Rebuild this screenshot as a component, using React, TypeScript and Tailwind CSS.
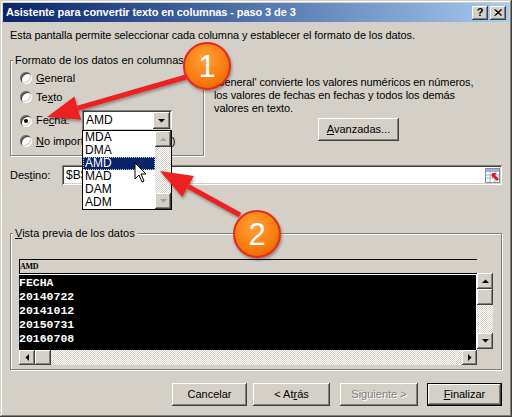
import React from "react";

const raised =
  "shadow-[inset_-1px_-1px_#404040,inset_1px_1px_#ffffff,inset_-2px_-2px_#808080,inset_2px_2px_#d4d0c8]";
const sunken =
  "shadow-[inset_1px_1px_#808080,inset_-1px_-1px_#ffffff,inset_2px_2px_#404040,inset_-2px_-2px_#d4d0c8]";
const checker =
  "bg-[image:repeating-conic-gradient(#ffffff_0%_25%,#d4d0c8_0%_50%)] bg-[length:2px_2px]";

function Tri({ dir, color = "#000000" }: { dir: "up" | "down" | "left" | "right"; color?: string }) {
  const pts =
    dir === "up"
      ? "0,4 7,4 3.5,0.5"
      : dir === "down"
      ? "0,0 7,0 3.5,3.5"
      : dir === "left"
      ? "4,0 4,7 0.5,3.5"
      : "0,0 0,7 3.5,3.5";
  const w = dir === "up" || dir === "down" ? 7 : 4;
  const h = dir === "up" || dir === "down" ? 4 : 7;
  return (
    <svg width={w} height={h} viewBox={`0 0 ${w} ${h}`}>
      <polygon points={pts} fill={color} />
    </svg>
  );
}

function SBtn({ dir, disabled, className = "" }: { dir: "up" | "down" | "left" | "right"; disabled?: boolean; className?: string }) {
  return (
    <div className={"flex items-center justify-center bg-[#d4d0c8] " + raised + " " + className}>
      <Tri dir={dir} color={disabled ? "#a0a0a0" : "#000000"} />
    </div>
  );
}

function Radio({ checked, children, className = "" }: { checked?: boolean; children: React.ReactNode; className?: string }) {
  return (
    <div className={"flex items-center h-[14px] " + className}>
      <span
        className={
          "w-[12px] h-[12px] rounded-full bg-white flex items-center justify-center shrink-0 " + sunken
        }
      >
        {checked && <span className="w-[4px] h-[4px] rounded-full bg-black" />}
      </span>
      <span className="ml-[4px] whitespace-nowrap">{children}</span>
    </div>
  );
}

function Group({ legend, className = "", children }: { legend: React.ReactNode; className?: string; children?: React.ReactNode }) {
  return (
    <div className={"border border-[#808080] shadow-[inset_1px_1px_#ffffff,1px_1px_#ffffff] " + className}>
      <div className="-mt-[7px] ml-[2px] w-fit px-[2px] bg-[#d4d0c8] leading-[13px] whitespace-nowrap">{legend}</div>
      {children}
    </div>
  );
}

function Btn({ children, className = "", def, disabled }: { children: React.ReactNode; className?: string; def?: boolean; disabled?: boolean }) {
  return (
    <div
      className={
        "h-[23px] flex items-center justify-center bg-[#d4d0c8] " +
        (def
          ? "border border-black shadow-[inset_-1px_-1px_#404040,inset_1px_1px_#ffffff,inset_-2px_-2px_#808080,inset_2px_2px_#d4d0c8]"
          : raised) +
        " " +
        (disabled ? "text-[#808080] [text-shadow:1px_1px_0_#ffffff] " : "") +
        className
      }
    >
      {children}
    </div>
  );
}

function arrowHead(sx: number, sy: number, tx: number, ty: number, len: number, hw: number) {
  const dx = sx - tx;
  const dy = sy - ty;
  const l = Math.hypot(dx, dy);
  const ux = dx / l;
  const uy = dy / l;
  const bx = tx + ux * len;
  const by = ty + uy * len;
  const px = -uy;
  const py = ux;
  return {
    pts: `${tx},${ty} ${bx + px * hw},${by + py * hw} ${bx - px * hw},${by - py * hw}`,
    bx,
    by,
  };
}

function Annotations() {
  const a1 = arrowHead(186, 77, 47, 117, 32, 12);
  const a2 = arrowHead(240, 215, 160, 171, 32, 12);
  return (
    <svg className="absolute left-0 top-0 pointer-events-none z-20" width="512" height="417" viewBox="0 0 512 417">
      <defs>
        <radialGradient id="og" cx="45%" cy="35%" r="65%">
          <stop offset="0%" stopColor="#ffa23a" />
          <stop offset="70%" stopColor="#f87d10" />
          <stop offset="100%" stopColor="#ee6a00" />
        </radialGradient>
        <filter id="sh" x="-30%" y="-30%" width="160%" height="160%">
          <feDropShadow dx="1" dy="2" stdDeviation="1.5" floodColor="#000" floodOpacity="0.35" />
        </filter>
      </defs>
      <polygon
        points="135,163 135,179 139,175 142,182 144,181 141,174 146,174"
        fill="#ffffff"
        stroke="#000000"
        strokeWidth="1"
        strokeLinejoin="miter"
      />
      <g filter="url(#sh)">
        <line x1="186" y1="77" x2={a1.bx} y2={a1.by} stroke="#ec2020" strokeWidth="5" />
        <polygon points={a1.pts} fill="#ec2020" />
        <line x1="240" y1="215" x2={a2.bx} y2={a2.by} stroke="#ec2020" strokeWidth="5" />
        <polygon points={a2.pts} fill="#ec2020" />
        <circle cx="207" cy="66" r="23" fill="url(#og)" stroke="#e52a1c" strokeWidth="2" />
        <circle cx="257" cy="234" r="23" fill="url(#og)" stroke="#e52a1c" strokeWidth="2" />
      </g>
      <text x="207" y="77" textAnchor="middle" fill="#ffffff" fontSize="31" fontFamily="Liberation Sans, Arial, sans-serif">
        1
      </text>
      <text x="257" y="245" textAnchor="middle" fill="#ffffff" fontSize="31" fontFamily="Liberation Sans, Arial, sans-serif">
        2
      </text>
    </svg>
  );
}

function RefIcon() {
  return (
    <svg width="15" height="15" viewBox="0 0 15 15">
      <rect x="0.5" y="0.5" width="14" height="14" fill="#ffffff" stroke="#7f8fa6" />
      <rect x="1" y="1" width="13" height="3" fill="#9fb4d8" />
      <line x1="1" y1="7" x2="14" y2="7" stroke="#9fb4d8" />
      <line x1="1" y1="10" x2="14" y2="10" stroke="#9fb4d8" />
      <line x1="5" y1="1" x2="5" y2="14" stroke="#9fb4d8" />
      <line x1="10" y1="1" x2="10" y2="14" stroke="#9fb4d8" />
      <polygon points="8,5 14,11 12,13 6,7" fill="#e02020" />
      <polygon points="7,5 12,5 7,10" fill="#e02020" />
    </svg>
  );
}

export default function App() {
  return (
    <div className="relative w-[512px] h-[417px] overflow-hidden bg-[#d4d0c8] p-[3px] shadow-[inset_-1px_-1px_#404040,inset_1px_1px_#d4d0c8,inset_-2px_-2px_#808080,inset_2px_2px_#ffffff] font-['Liberation_Sans',Arial,sans-serif] text-[11px] leading-[13px] text-black">
      <div className="h-[19px] flex items-center bg-linear-to-r from-[#0a246a] to-[#a6caf0] pl-[3px] pr-[3px]">
        <span className="text-white font-bold text-[11px] whitespace-nowrap tracking-[-0.1px]">
          Asistente para convertir texto en columnas - paso 3 de 3
        </span>
        <div className="ml-auto flex">
          <div className={"w-[16px] h-[14px] flex items-center justify-center bg-[#d4d0c8] font-bold text-[11px] leading-[11px] " + raised}>
            ?
          </div>
          <div className={"ml-[2px] w-[16px] h-[14px] flex items-center justify-center bg-[#d4d0c8] " + raised}>
            <svg width="8" height="7" viewBox="0 0 8 7">
              <path d="M0.5 0.5 L7 6.5 M1.5 0.5 L8 6.5 M7 0.5 L0.5 6.5 M8 0.5 L1.5 6.5" stroke="#000" strokeWidth="1" />
            </svg>
          </div>
        </div>
      </div>

      <div className="flex flex-col px-[7px]">
        <div className="mt-[7px] whitespace-nowrap tracking-[-0.1px]">
          Esta pantalla permite seleccionar cada columna y establecer el formato de los datos.
        </div>

        <div className="flex items-start mt-[18px]">
          <Group legend="Formato de los datos en columnas" className="w-[194px] h-[96px] shrink-0">
            <div className="flex flex-col pl-[9px]">
              <Radio className="mt-[4px]">
                <u>G</u>eneral
              </Radio>
              <Radio className="mt-[5px]">
                Te<u>x</u>to
              </Radio>
              <div className="flex items-center mt-[6px] h-[21px]">
                <Radio checked>
                  <span className="inline-block w-[46px]">
                    Fe<u>c</u>ha:
                  </span>
                </Radio>
                <div className="relative w-[90px] h-[21px]">
                  <div className={"w-full h-full bg-white flex items-center " + sunken}>
                    <span className="pl-[4px] text-[12px]">AMD</span>
                    <SBtn dir="down" className="ml-auto mr-[2px] w-[17px] h-[17px]" />
                  </div>
                  <div className="absolute left-0 top-[20px] w-[90px] h-[80px] border border-black bg-white flex z-10 text-[12px] leading-[13px]">
                    <div className="flex flex-col w-[72px]">
                      <div className="h-[13px] pl-[2px]">MDA</div>
                      <div className="h-[13px] pl-[2px]">DMA</div>
                      <div className="h-[13px] pl-[1px] bg-[#0a246a] text-white border border-dotted border-[#d4d0c8] leading-[11px]">
                        AMD
                      </div>
                      <div className="h-[13px] pl-[2px]">MAD</div>
                      <div className="h-[13px] pl-[2px]">DAM</div>
                      <div className="h-[13px] pl-[2px]">ADM</div>
                    </div>
                    <div className={"flex flex-col w-[16px] " + checker}>
                      <SBtn dir="up" disabled className="h-[16px]" />
                      <div className="flex-1" />
                      <SBtn dir="down" disabled className="h-[16px]" />
                    </div>
                  </div>
                </div>
              </div>
              <Radio className="mt-[3px]">
                <u>N</u>o importar columna (saltar)
              </Radio>
            </div>
          </Group>

          <div className="ml-[10px] mt-[16px] flex flex-col">
            <div className="whitespace-nowrap leading-[13px] tracking-[-0.1px]">
              'General' convierte los valores numéricos en números,
              <br />
              los valores de fechas en fechas y todos los demás
              <br />
              valores en texto.
            </div>
            <Btn className="mt-[3px] ml-[104px] w-[81px] h-[22px]">
              <span>
                <u>A</u>vanzadas...
              </span>
            </Btn>
          </div>
        </div>

        <div className="flex items-center mt-[9px] h-[20px]">
          <span className="w-[52px] shrink-0">
            Des<u>t</u>ino:
          </span>
          <div className={"flex-1 h-[20px] bg-white flex items-center pr-[2px] " + sunken}>
            <span className="pl-[4px] text-[12px]">$B$</span>
            <div className="ml-auto">
              <RefIcon />
            </div>
          </div>
        </div>

        <Group
          legend={
            <>
              <u>V</u>ista previa de los datos
            </>
          }
          className="mt-[48px] h-[137px]"
        >
          <div className="mt-[19px] ml-[8px] w-[474px] h-[106px] flex">
            <div className="w-[458px] flex flex-col">
              <div className="h-[15px] border-t border-l border-black border-b bg-[#d4d0c8] flex items-center">
                <span className="font-['Liberation_Serif',serif] font-bold text-[8px] leading-[8px] tracking-[-0.3px]">AMD</span>
              </div>
              <div className="h-[76px] bg-black border-t border-white border-r border-r-white text-white font-['Liberation_Mono',monospace] font-bold text-[11.5px] leading-[14px] pt-[1px] whitespace-pre">
                <div>FECHA</div>
                <div>20140722</div>
                <div>20141012</div>
                <div>20150731</div>
                <div>20160708</div>
              </div>
              <div className={"h-[15px] flex " + checker}>
                <SBtn dir="left" className="w-[16px]" />
                <div className={"w-[16px] bg-[#d4d0c8] " + raised} />
                <div className="flex-1" />
                <SBtn dir="right" className="w-[15px]" />
              </div>
            </div>
            <div className="w-[16px] flex flex-col">
              <div className="h-[14px]" />
              <div className={"h-[76px] flex flex-col " + checker}>
                <SBtn dir="up" className="h-[16px]" />
                <div className={"h-[16px] bg-[#d4d0c8] " + raised} />
                <div className="flex-1" />
                <SBtn dir="down" className="h-[16px]" />
              </div>
            </div>
          </div>
        </Group>

        <div className="flex mt-[13px]">
          <Btn className="ml-[162px] w-[75px]">Cancelar</Btn>
          <Btn className="ml-[6px] w-[77px]">
            <span>
              &lt; At<u>r</u>ás
            </span>
          </Btn>
          <Btn className="ml-[10px] w-[78px]" disabled>
            Siguiente &gt;
          </Btn>
          <Btn className="ml-[9px] w-[75px]" def>
            <span>
              <u>F</u>inalizar
            </span>
          </Btn>
        </div>
      </div>

      <Annotations />
    </div>
  );
}
